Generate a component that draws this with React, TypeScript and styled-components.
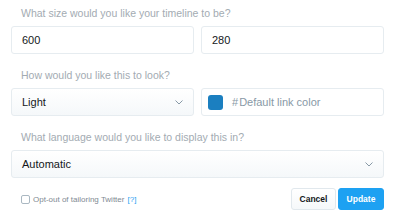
import styled, { createGlobalStyle } from "styled-components";

const GlobalStyle = createGlobalStyle`
  html, body {
    margin: 0;
    padding: 0;
    background: #fff;
  }
  body {
    font-family: "Liberation Sans", Arial, sans-serif;
    -webkit-font-smoothing: antialiased;
  }
`;

const Form = styled.div`
  width: 400px;
  height: 221px;
  box-sizing: border-box;
  padding: 0 16px 0 11px;
  display: flex;
  flex-direction: column;
`;

const Group = styled.div<{ $first?: boolean }>`
  display: flex;
  flex-direction: column;
  margin-top: ${(p) => (p.$first ? "0" : "8px")};
`;

const Label = styled.div`
  height: 26px;
  line-height: 26px;
  padding-left: 10px;
  font-size: 10.5px;
  color: #a3abb2;
`;

const Row = styled.div`
  display: flex;
  gap: 7px;
`;

const Field = styled.div<{ $select?: boolean }>`
  flex: 1;
  height: 28px;
  box-sizing: border-box;
  border: 1px solid #e6ecf0;
  border-radius: 3px;
  display: flex;
  align-items: center;
  padding: 0 10px;
  font-size: 11px;
  color: #14171a;
  background: ${(p) =>
    p.$select ? "linear-gradient(#fff, #f5f8fa)" : "#fff"};
  justify-content: ${(p) => (p.$select ? "space-between" : "flex-start")};
`;

const Swatch = styled.span`
  width: 15px;
  height: 15px;
  border-radius: 3px;
  background: #1b7fc0;
  margin-left: -4px;
  margin-right: 9px;
`;

const Hash = styled.span`
  color: #8899a6;
  margin-right: 1px;
`;

const Placeholder = styled.span`
  color: #8899a6;
`;

const Footer = styled.div`
  margin-top: 10px;
  display: flex;
  align-items: center;
  justify-content: space-between;
`;

const OptOut = styled.label`
  display: flex;
  align-items: center;
  padding-left: 10px;
  font-size: 8px;
  color: #7f8a93;
`;

const Box = styled.span`
  width: 7px;
  height: 7px;
  border: 1px solid #aab8c2;
  border-radius: 2px;
  background: #fff;
  margin-right: 3px;
`;

const Help = styled.span`
  color: #1da1f2;
  margin-left: 3px;
`;

const Buttons = styled.div`
  display: flex;
  gap: 2px;
`;

const Button = styled.button<{ $primary?: boolean }>`
  height: 22px;
  width: ${(p) => (p.$primary ? "46px" : "45px")};
  box-sizing: border-box;
  padding: 0;
  border-radius: 3px;
  font-family: inherit;
  font-size: 8.5px;
  font-weight: bold;
  border: 1px solid ${(p) => (p.$primary ? "#1da1f2" : "#e1e8ed")};
  background: ${(p) =>
    p.$primary ? "#1da1f2" : "linear-gradient(#fff, #f5f8fa)"};
  color: ${(p) => (p.$primary ? "#fff" : "#14171a")};
`;

const Chevron = () => (
  <svg width="8" height="5" viewBox="0 0 8 5">
    <path d="M0.5 0.5 L4 4 L7.5 0.5" fill="none" stroke="#8899a6" strokeWidth="1" />
  </svg>
);

export default function App() {
  return (
    <>
      <GlobalStyle />
      <Form>
        <Group $first>
          <Label>What size would you like your timeline to be?</Label>
          <Row>
            <Field>600</Field>
            <Field>280</Field>
          </Row>
        </Group>
        <Group>
          <Label>How would you like this to look?</Label>
          <Row>
            <Field $select>
              Light
              <Chevron />
            </Field>
            <Field>
              <Swatch />
              <Hash>#</Hash>
              <Placeholder>Default link color</Placeholder>
            </Field>
          </Row>
        </Group>
        <Group>
          <Label>What language would you like to display this in?</Label>
          <Row>
            <Field $select>
              Automatic
              <Chevron />
            </Field>
          </Row>
        </Group>
        <Footer>
          <OptOut>
            <Box />
            Opt-out of tailoring Twitter
            <Help>[?]</Help>
          </OptOut>
          <Buttons>
            <Button>Cancel</Button>
            <Button $primary>Update</Button>
          </Buttons>
        </Footer>
      </Form>
    </>
  );
}
